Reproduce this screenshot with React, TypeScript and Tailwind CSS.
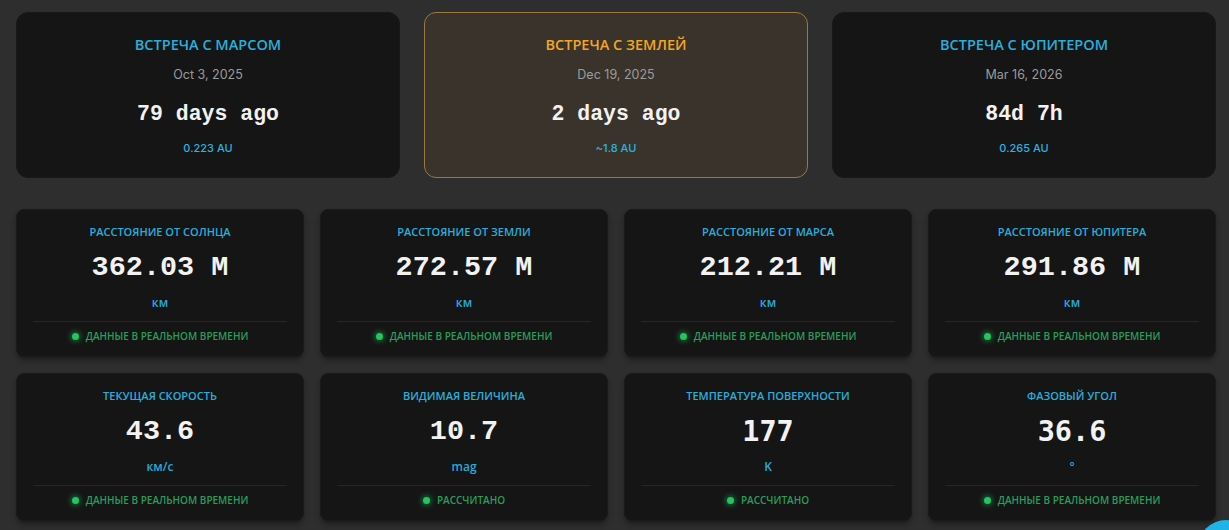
import React from 'react'

type Encounter = { title: string; date: string; value: string; dist: string; current?: boolean }
type Stat = { title: string; value: string; unit: string; status: string; sans?: boolean }

const ENCOUNTERS: Encounter[] = [
  { title: 'Встреча с Марсом', date: 'Oct 3, 2025', value: '79 days ago', dist: '0.223 AU' },
  { title: 'Встреча с Землей', date: 'Dec 19, 2025', value: '2 days ago', dist: '~1.8 AU', current: true },
  { title: 'Встреча с Юпитером', date: 'Mar 16, 2026', value: '84d 7h', dist: '0.265 AU' },
]

const LIVE = 'Данные в реальном времени'
const CALC = 'Рассчитано'

const STATS: Stat[] = [
  { title: 'Расстояние от Солнца', value: '362.03 M', unit: 'км', status: LIVE },
  { title: 'Расстояние от Земли', value: '272.57 M', unit: 'км', status: LIVE },
  { title: 'Расстояние от Марса', value: '212.21 M', unit: 'км', status: LIVE },
  { title: 'Расстояние от Юпитера', value: '291.86 M', unit: 'км', status: LIVE },
  { title: 'Текущая скорость', value: '43.6', unit: 'км/с', status: LIVE },
  { title: 'Видимая величина', value: '10.7', unit: 'mag', status: CALC },
  { title: 'Температура поверхности', value: '177', unit: 'K', status: CALC, sans: true },
  { title: 'Фазовый угол', value: '36.6', unit: '°', status: LIVE, sans: true },
]

function EncounterCard({ e }: { e: Encounter }) {
  return (
    <div
      className={
        e.current
          ? 'h-[166px] rounded-xl border border-[#9a7942] bg-[#39332c] pt-[22px] text-center'
          : 'h-[166px] rounded-xl border border-[#181818] bg-[#151515] pt-[22px] text-center'
      }
    >
      <div
        className={
          e.current
            ? "text-[14.5px] leading-5 font-semibold uppercase text-[#f2a526] font-['Open_Sans',sans-serif]"
            : "text-[14.5px] leading-5 font-semibold uppercase text-[#2aaedc] font-['Open_Sans',sans-serif]"
        }
      >
        {e.title}
      </div>
      <div className="mt-[11px] text-[12.5px] leading-[18px] text-[#9b9b9b] font-['Inter',sans-serif]">{e.date}</div>
      <div className="mt-4 text-[21.5px] leading-7 font-bold text-[#f2f2f2] font-['Courier_New','Liberation_Mono',monospace]">
        {e.value}
      </div>
      <div className="mt-3 text-[11px] leading-4 font-medium text-[#2bb3e0] font-['Inter',sans-serif]">{e.dist}</div>
    </div>
  )
}

function StatCard({ s }: { s: Stat }) {
  return (
    <div className="h-[148px] rounded-lg border border-[#1a1a1a] bg-[#151515] px-4 pt-[15px] text-center shadow-md shadow-black/30">
      <div className="text-[11px] leading-[14px] font-semibold uppercase text-[#2aaedc] font-['Open_Sans',sans-serif]">
        {s.title}
      </div>
      <div
        className={
          s.sans
            ? "mt-[13px] text-[28.5px] leading-8 font-bold text-[#f2f2f2] font-['DejaVu_Sans_Mono',monospace]"
            : "mt-[13px] text-[28.5px] leading-8 font-bold text-[#f2f2f2] font-['Courier_New','Liberation_Mono',monospace]"
        }
      >
        {s.value}
      </div>
      <div className="mt-[11px] text-[12px] leading-4 font-semibold text-[#2aa8d6] font-['Open_Sans',sans-serif]">{s.unit}</div>
      <div className="mt-[10px] border-t border-[#20292a] pt-2">
        <div className="flex items-center justify-center gap-[7px] text-[10px] leading-3 font-semibold uppercase text-[#2a9d5c] font-['Open_Sans',sans-serif]">
          <span className="h-[7px] w-[7px] rounded-full bg-[#22c55e] shadow-[0_0_6px_#22c55e]" />
          {s.status}
        </div>
      </div>
    </div>
  )
}

export default function App() {
  return (
    <div className="relative h-[530px] overflow-hidden bg-[#2e2e2e] pl-4 pr-[13px] pt-3">
      <div className="grid grid-cols-3 gap-6">
        {ENCOUNTERS.map((e) => (
          <EncounterCard key={e.title} e={e} />
        ))}
      </div>
      <div className="mt-[31px] grid grid-cols-4 gap-4">
        {STATS.map((s) => (
          <StatCard key={s.title} s={s} />
        ))}
      </div>
      <div className="absolute left-[1198px] top-[520px] h-14 w-14 rounded-full bg-[#1eb4e8]" />
    </div>
  )
}
